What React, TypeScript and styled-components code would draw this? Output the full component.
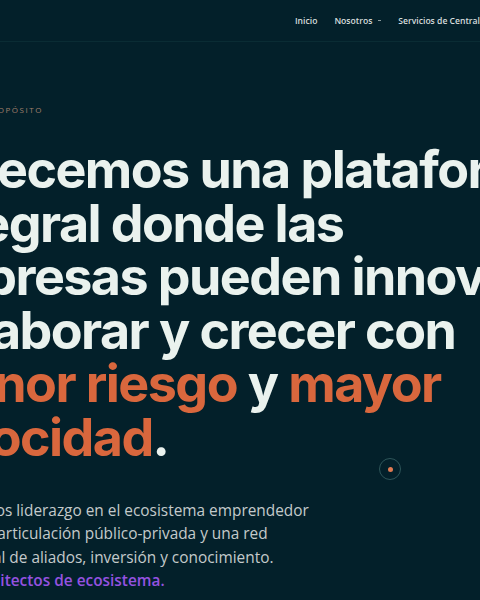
import React from 'react'
import styled, { createGlobalStyle } from 'styled-components'

const GlobalStyle = createGlobalStyle`
  html, body {
    margin: 0;
    padding: 0;
    background: #03202a;
  }
`

const Page = styled.div`
  position: relative;
  width: 480px;
  height: 600px;
  overflow: hidden;
  background: #03202a;
  font-family: Inter, 'Noto Sans', sans-serif;
`

const Header = styled.header`
  display: flex;
  align-items: center;
  height: 41px;
  border-bottom: 1px solid #0a2c34;
  padding-left: 295px;
  white-space: nowrap;
`

const NavItem = styled.a`
  display: inline-flex;
  align-items: center;
  gap: 4px;
  margin-right: 17px;
  font-family: 'Open Sans', sans-serif;
  font-size: 8.6px;
  font-weight: 600;
  color: #d6dddd;
  text-decoration: none;
`

const Caret = styled.span`
  width: 3px;
  height: 1px;
  margin-left: 2px;
  background: #8a9a9c;
`

const Hero = styled.section`
  padding-top: 62px;
`

const Label = styled.div`
  margin-left: -15px;
  font-family: 'Open Sans', sans-serif;
  font-size: 8px;
  letter-spacing: 0.19em;
  text-transform: uppercase;
  color: #a07f6a;
  line-height: 12px;
`

const Headline = styled.h1`
  margin: 27px 0 0 0;
  font-family: Inter, sans-serif;
  font-size: 52px;
  font-weight: 700;
  line-height: 53.6px;
  letter-spacing: -0.03em;
  color: #eaf2ee;
  white-space: nowrap;
`

const HeadLine = styled.span<{ $shift: number }>`
  display: block;
  margin-left: ${(p) => p.$shift}px;
`

const Accent = styled.span`
  color: #d9673d;
`

const Text = styled.div`
  margin-top: 34px;
  font-family: 'Open Sans', sans-serif;
  font-size: 15.4px;
  line-height: 23.6px;
  color: #c3cacb;
  white-space: nowrap;
`

const Line = styled.div<{ $shift: number; $strong?: boolean }>`
  margin-left: ${(p) => p.$shift}px;
  font-weight: ${(p) => (p.$strong ? 600 : 400)};
  color: ${(p) => (p.$strong ? '#9552e0' : 'inherit')};
`

const ScrollDot = styled.div`
  position: absolute;
  left: 379px;
  top: 458px;
  width: 20px;
  height: 20px;
  border: 1px solid #2d5559;
  border-radius: 50%;
  display: flex;
  align-items: center;
  justify-content: center;

  &::after {
    content: '';
    width: 5px;
    height: 5px;
    border-radius: 50%;
    background: #e07a52;
  }
`

export default function App() {
  return (
    <Page>
      <GlobalStyle />
      <Header>
        <NavItem href="#">Inicio</NavItem>
        <NavItem href="#">
          Nosotros <Caret />
        </NavItem>
        <NavItem href="#">Servicios de Central</NavItem>
      </Header>
      <Hero>
        <Label>Propósito</Label>
        <Headline>
          <HeadLine $shift={-79}>Ofrecemos una plataforma</HeadLine>
          <HeadLine $shift={-81}>integral donde las</HeadLine>
          <HeadLine $shift={-91}>empresas pueden innovar,</HeadLine>
          <HeadLine $shift={-81}>colaborar y crecer con</HeadLine>
          <HeadLine $shift={-81}>
            <Accent>menor riesgo</Accent> y <Accent>mayor</Accent>
          </HeadLine>
          <HeadLine $shift={-81}>
            <Accent>velocidad</Accent>.
          </HeadLine>
        </Headline>
        <Text>
          <Line $shift={-62}>Ejercemos liderazgo en el ecosistema emprendedor</Line>
          <Line $shift={-75}>mediante articulación público-privada y una red</Line>
          <Line $shift={-38}>global de aliados, inversión y conocimiento.</Line>
          <Line $shift={-88} $strong>
            Somos arquitectos de ecosistema.
          </Line>
        </Text>
      </Hero>
      <ScrollDot />
    </Page>
  )
}
